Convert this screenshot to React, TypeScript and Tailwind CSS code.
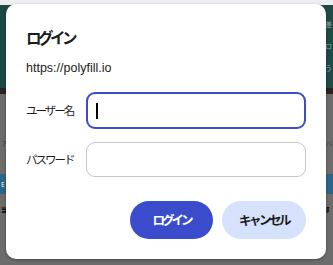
const jp = { fontFamily: '"Noto Sans CJK JP", "Noto Sans", sans-serif' };

function Backdrop() {
  return (
    <div className="flex h-[265px] w-[333px] flex-col overflow-hidden bg-[#6c6c6c]" style={jp}>
      <div className="h-[5px] bg-[#eceef2]" />
      <div className="flex h-[83px] justify-end bg-[#1f4946] pr-[1px]">
        <div className="flex w-[7px] flex-col gap-2 pt-[12px] text-[7px] leading-[14px] text-[#8fa9a6]">
          <span>差</span>
          <span>ロ</span>
          <span>う</span>
        </div>
      </div>
      <div className="h-[6px] bg-[#2a231f]" />
      <div className="flex h-[80px] items-end justify-between pb-[26px] pl-[1px] pr-[1px] text-[6px] text-[#3d3d3d]">
        <span>ア</span>
        <span>バ</span>
      </div>
      <div className="flex h-[20px] items-center bg-[#2b6688] pl-[1px] text-[6px] font-bold text-[#c4d2dc]">E</div>
      <div className="flex h-[30px] items-center justify-between px-[1px] text-[6px] font-bold text-black">
        <span>当</span>
        <span>阝</span>
      </div>
      <div className="pl-[16px] text-[16px] text-[#222]">( は</div>
    </div>
  );
}

export default function App() {
  return (
    <div className="relative h-[265px] w-[333px] overflow-hidden">
      <Backdrop />
      <div
        className="absolute left-[6px] top-[4px] flex h-[255px] w-[320px] flex-col rounded-[10px] bg-white px-5 pt-[21px] pb-5 shadow-[0_1px_3px_rgba(0,0,0,0.35)]"
        style={jp}
      >
        <h2 className="text-[15.5px] font-semibold leading-[24px] tracking-[-3.5px] text-[#1b1b1b]">ログイン</h2>
        <p
          className="mt-[9px] text-[12.5px] leading-[20px] text-[#1b1b1b]"
          style={{ fontFamily: '"Liberation Sans", Arial, sans-serif' }}
        >
          https://polyfill.io
        </p>

        <div className="mt-[14px] flex flex-col gap-[13px]">
          <label className="flex items-center">
            <span className="w-[60px] text-[11.5px] tracking-[-2px] text-[#1b1b1b]">ユーザー名</span>
            <div className="flex h-[37px] w-[220px] items-center rounded-[9px] border-2 border-[#3a4ccc] pl-[8px]">
              <span className="h-[16px] w-[1.5px] bg-black" />
            </div>
          </label>
          <label className="flex items-center">
            <span className="w-[60px] text-[11.5px] tracking-[-2px] text-[#1b1b1b]">パスワード</span>
            <div className="h-[35px] w-[220px] rounded-[9px] border border-[#c6c6c6]" />
          </label>
        </div>

        <div className="mt-auto flex justify-end gap-[9px]">
          <button className="h-[38px] w-[83px] rounded-full bg-[#3a4ccc] text-[12.5px] font-semibold tracking-[-3px] text-white">
            ログイン
          </button>
          <button className="h-[38px] w-[84px] rounded-full bg-[#d6e2fb] text-[12.5px] font-semibold tracking-[-2.5px] text-[#1b1b1b]">
            キャンセル
          </button>
        </div>
      </div>
    </div>
  );
}
